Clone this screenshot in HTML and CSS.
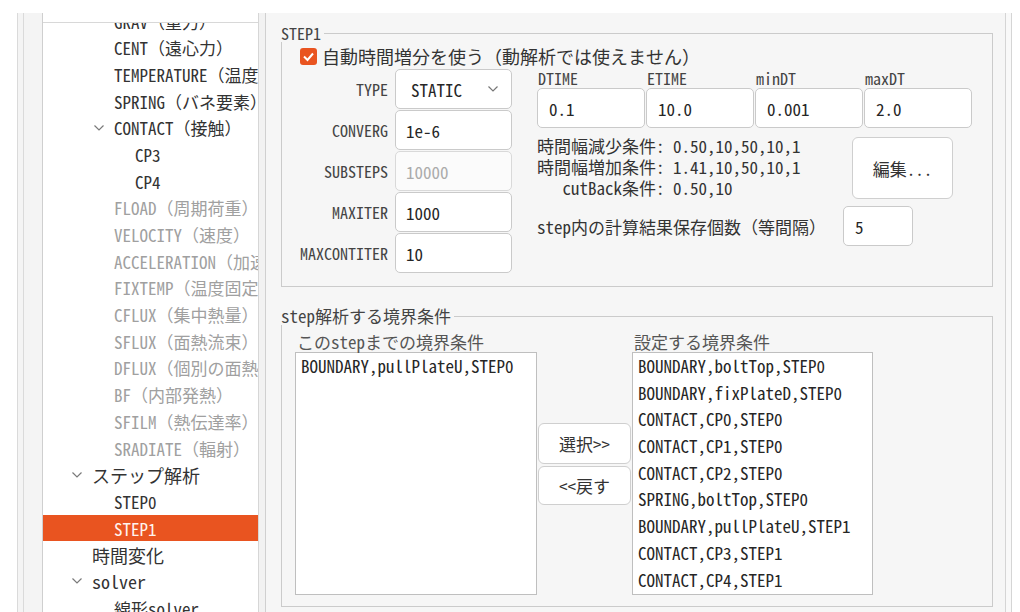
FILE: index.html
```html
<!DOCTYPE html>
<html lang="ja">
<head>
  <meta charset="UTF-8" />
  <meta name="viewport" content="width=device-width, initial-scale=1.0" />
  <title>STEP1</title>
  <link rel="stylesheet" href="styles.css">
</head>
<body>
  <div class="app">
    <div class="rail"><div class="rail-in"></div></div>

    <div class="tree">
      <div class="tree-head"></div>
      <div class="tree-body">
        <div class="rows">
          <div class="row l2"><span class="tw"></span>GRAV（重力）</div>
          <div class="row l2"><span class="tw"></span>CENT（遠心力）</div>
          <div class="row l2"><span class="tw"></span>TEMPERATURE（温度）</div>
          <div class="row l2"><span class="tw"></span>SPRING（バネ要素）</div>
          <div class="row l2"><span class="tw"><svg width="10" height="6" viewBox="0 0 10 6"><polyline points="0.5,0.5 5,5 9.5,0.5" /></svg></span>CONTACT（接触）</div>
          <div class="row l3"><span class="tw"></span>CP3</div>
          <div class="row l3"><span class="tw"></span>CP4</div>
          <div class="row l2 off"><span class="tw"></span>FLOAD（周期荷重）</div>
          <div class="row l2 off"><span class="tw"></span>VELOCITY（速度）</div>
          <div class="row l2 off"><span class="tw"></span>ACCELERATION（加速度）</div>
          <div class="row l2 off"><span class="tw"></span>FIXTEMP（温度固定）</div>
          <div class="row l2 off"><span class="tw"></span>CFLUX（集中熱量）</div>
          <div class="row l2 off"><span class="tw"></span>SFLUX（面熱流束）</div>
          <div class="row l2 off"><span class="tw"></span>DFLUX（個別の面熱流束）</div>
          <div class="row l2 off"><span class="tw"></span>BF（内部発熱）</div>
          <div class="row l2 off"><span class="tw"></span>SFILM（熱伝達率）</div>
          <div class="row l2 off"><span class="tw"></span>SRADIATE（輻射）</div>
          <div class="row l1"><span class="tw"><svg width="10" height="6" viewBox="0 0 10 6"><polyline points="0.5,0.5 5,5 9.5,0.5" /></svg></span>ステップ解析</div>
          <div class="row l2"><span class="tw"></span>STEP0</div>
          <div class="row l2 sel"><span class="tw"></span>STEP1</div>
          <div class="row l1"><span class="tw"></span>時間変化</div>
          <div class="row l1"><span class="tw"><svg width="10" height="6" viewBox="0 0 10 6"><polyline points="0.5,0.5 5,5 9.5,0.5" /></svg></span>solver</div>
          <div class="row l2"><span class="tw"></span>線形solver</div>
        </div>
      </div>
    </div>

    <div class="split"></div>

    <div class="panel">
      <fieldset class="group">
        <legend>STEP1</legend>
        <div class="check">
          <span class="box"><svg width="17" height="17" viewBox="0 0 17 17"><polyline points="4,8.5 7.5,12 13,5.5" /></svg></span>
          <span>自動時間増分を使う（動解析では使えません）</span>
        </div>
        <div class="step-body">
          <div class="params">
            <label>TYPE</label>
            <div class="field select">STATIC <svg width="10" height="6" viewBox="0 0 10 6"><polyline points="0.5,0.5 5,5 9.5,0.5" /></svg></div>
            <label>CONVERG</label>
            <div class="field">1e-6</div>
            <label>SUBSTEPS</label>
            <div class="field off">10000</div>
            <label>MAXITER</label>
            <div class="field">1000</div>
            <label>MAXCONTITER</label>
            <div class="field">10</div>
          </div>

          <div class="right">
            <div class="times">
              <div class="head">DTIME</div>
              <div class="head">ETIME</div>
              <div class="head">minDT</div>
              <div class="head">maxDT</div>
              <div class="field">0.1</div>
              <div class="field">10.0</div>
              <div class="field">0.001</div>
              <div class="field">2.0</div>
            </div>

            <div class="info">
              <div class="cond">
                <span class="k">時間幅減少条件: </span><span>0.50,10,50,10,1</span>
                <span class="k">時間幅増加条件: </span><span>1.41,10,50,10,1</span>
                <span class="k">cutBack条件: </span><span>0.50,10</span>
              </div>
              <button class="btn edit">編集...</button>
            </div>

            <div class="save">
              <span class="save-label">step内の計算結果保存個数（等間隔）</span>
              <div class="field save-val">5</div>
            </div>
          </div>
        </div>
      </fieldset>

      <fieldset class="group bc">
        <legend>step解析する境界条件</legend>
        <div class="bounds">
          <div class="col">
            <div class="col-head">このstepまでの境界条件</div>
            <div class="list">
              <div class="item">BOUNDARY,pullPlateU,STEP0</div>
            </div>
          </div>
          <div class="moves">
            <button class="btn">選択&gt;&gt;</button>
            <button class="btn">&lt;&lt;戻す</button>
          </div>
          <div class="col">
            <div class="col-head">設定する境界条件</div>
            <div class="list">
              <div class="item">BOUNDARY,boltTop,STEP0</div>
              <div class="item">BOUNDARY,fixPlateD,STEP0</div>
              <div class="item">CONTACT,CP0,STEP0</div>
              <div class="item">CONTACT,CP1,STEP0</div>
              <div class="item">CONTACT,CP2,STEP0</div>
              <div class="item">SPRING,boltTop,STEP0</div>
              <div class="item">BOUNDARY,pullPlateU,STEP1</div>
              <div class="item">CONTACT,CP3,STEP1</div>
              <div class="item">CONTACT,CP4,STEP1</div>
            </div>
          </div>
        </div>
      </fieldset>
    </div>

    <div class="edge"></div>
  </div>
</body>
</html>
```

FILE: styles.css
```css
* { box-sizing: border-box; }

body {
  margin: 0;
  background: #fff;
  font-family: "Noto Sans Mono CJK JP", "Noto Sans CJK JP", monospace;
  font-size: 17px;
  color: #333;
}

.app {
  display: flex;
  margin-top: 13px;
  height: 599px;
}

/* left rails */
.rail { width: 42px; padding-left: 17px; }
.rail-in {
  height: 100%;
  border-left: 1px solid #dadada;
  background: #f4f4f4;
}
.rail-in::before {
  content: "";
  display: block;
  width: 5px;
  height: 100%;
  border-right: 1px solid #dadada;
}

/* tree */
.tree {
  width: 217px;
  display: flex;
  flex-direction: column;
  background: #fff;
  border-left: 1px solid #cfcfcf;
  border-right: 1px solid #d6d6d6;
}
.tree-head {
  height: 10px;
  border-bottom: 1px solid #d8d8d8;
}
.tree-body { flex: 1; overflow: hidden; }
.rows { margin-top: -15.3px; }

.row {
  height: 26.7px;
  display: flex;
  align-items: center;
  white-space: nowrap;
  color: #333;
}
.row.l1 { padding-left: 29px; font-size: 18px; }
.row.l2 { padding-left: 51px; }
.row.l3 { padding-left: 72px; }
.row.off { color: #a0a0a0; }
.row.sel { background: #e95420; color: #fff3ee; }

.tw { width: 20px; flex: none; display: flex; align-items: center; }
.tw svg polyline { fill: none; stroke: #7a7a7a; stroke-width: 1.2; }

.split {
  width: 7px;
  background: #f2f2f2;
  border-right: 1px solid #d0d0d0;
}

/* right panel */
.panel {
  width: 739px;
  background: #f6f6f6;
  padding: 11px 12px 0 15px;
}

.edge {
  width: 7px;
  background: #f9f9f9;
  border-left: 1px solid #d5d5d5;
  border-right: 1px solid #d5d5d5;
}

.group {
  margin: 0;
  padding: 0 0 13px 0;
  min-width: 0;
  border: 1px solid #cbcbcb;
}
.group legend {
  padding: 0 3px 0 0;
  margin-left: -1px;
  line-height: 18px;
  font-size: 16px;
  color: #444;
}
.group.bc { margin-top: 20px; padding-bottom: 11px; }
.group.bc legend { font-size: 17px; }

.check {
  display: flex;
  align-items: center;
  gap: 5px;
  height: 24px;
  margin-top: 2px;
  padding-left: 18px;
  font-size: 18px;
  color: #333;
}
.box {
  width: 17px;
  height: 17px;
  border-radius: 3px;
  background: #e95420;
}
.box svg { display: block; }
.box polyline { fill: none; stroke: #fff; stroke-width: 2; }

.step-body {
  display: flex;
  margin-top: 1px;
  padding-left: 8px;
}

.params {
  display: grid;
  grid-template-columns: 98px 117px;
  grid-auto-rows: 40px;
  column-gap: 7px;
  row-gap: 1px;
}
.params label {
  align-self: center;
  text-align: right;
  font-size: 16px;
  color: #444;
}

.field {
  height: 40px;
  display: flex;
  align-items: center;
  padding: 0 10px;
  background: #fff;
  border: 1px solid #cacaca;
  border-radius: 5px;
  color: #262626;
}
.field.off {
  color: #ababab;
  background: #fbfbfb;
  border-color: #d9d9d9;
}
.field.select {
  justify-content: space-between;
  padding: 0 13px 0 15px;
}
.field.select polyline { fill: none; stroke: #777; stroke-width: 1.2; }

.right { margin-left: 25px; }

.times {
  display: grid;
  grid-template-columns: repeat(4, 108px);
  column-gap: 1px;
}
.times .head {
  height: 19px;
  line-height: 19px;
  padding-left: 1px;
  font-size: 16px;
  color: #444;
}
.times .field { padding-left: 11px; }

.info {
  display: flex;
  margin-top: 7px;
}
.cond {
  width: 315px;
  display: grid;
  grid-template-columns: max-content max-content;
  align-content: start;
  line-height: 21px;
  color: #333;
}
.cond .k { text-align: right; white-space: pre; }

.btn {
  font-family: inherit;
  font-size: 17px;
  color: #333;
  background: #fff;
  border: 1px solid #cfcfcf;
  border-radius: 6px;
  padding: 0;
}
.edit {
  width: 101px;
  height: 62px;
  margin-top: 2px;
}

.save {
  display: flex;
  align-items: center;
  margin-top: 7px;
}
.save-label { width: 306px; color: #333; }
.save-val { width: 70px; padding-left: 11px; }

/* boundary lists */
.bounds {
  display: flex;
  padding: 8px 0 0 13px;
}
.col { width: 242px; }
.col + .moves + .col { width: 241px; }
.col-head {
  height: 19px;
  line-height: 18px;
  padding-left: 2px;
  color: #555;
}
.list {
  height: 243px;
  padding: 0 5px;
  background: #fff;
  border: 1px solid #bfbfbf;
  overflow: hidden;
}
.item {
  height: 26.7px;
  line-height: 26.7px;
  white-space: nowrap;
  color: #262626;
}

.moves {
  width: 93px;
  margin: 90px 1px 0 1px;
  display: flex;
  flex-direction: column;
  gap: 2px;
}
.moves .btn { height: 41px; }
.moves .btn + .btn { height: 39px; }
```
